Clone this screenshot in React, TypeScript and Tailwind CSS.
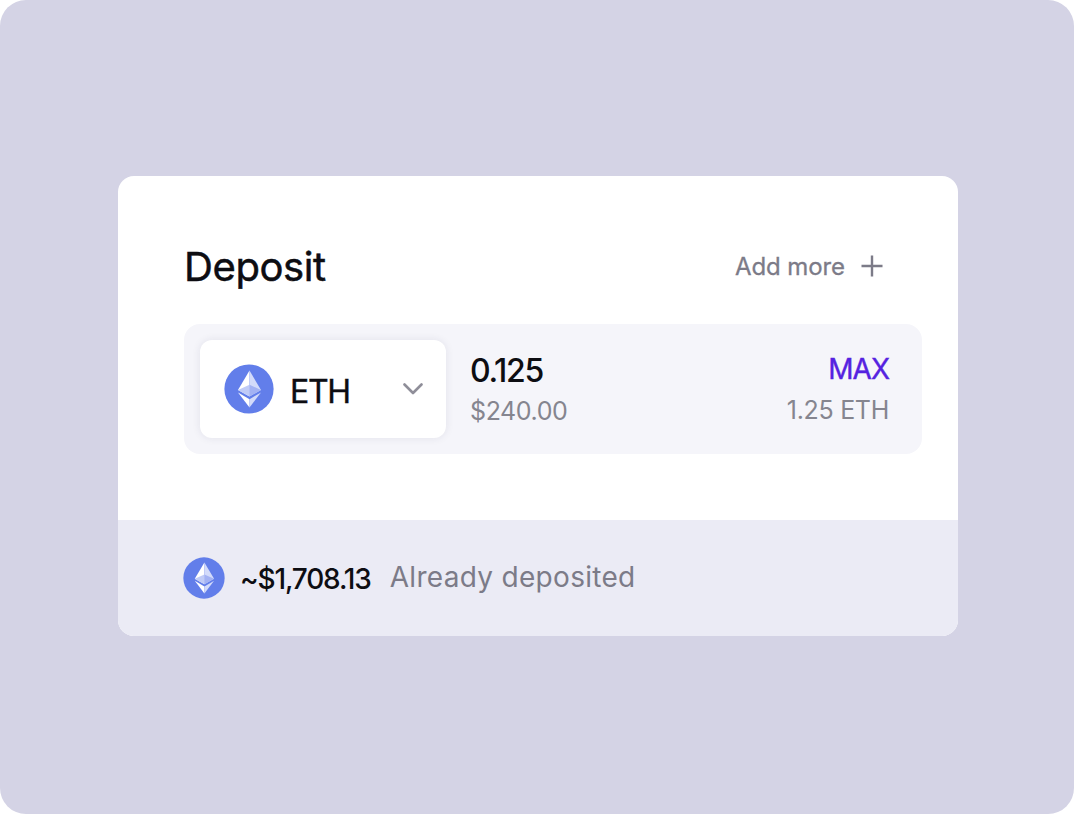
const EthIcon = ({ className }: { className: string }) => (
    <svg viewBox="0 0 50 50" className={className} aria-hidden="true">
        <circle cx="25" cy="25" r="24.6" fill="#627eea" />
        <path d="M25.5 6.5 14 26l11.5 6.5z" fill="#fff" />
        <path d="M25.5 6.5 37 26l-11.5 6.5z" fill="#d3dbfa" />
        <path d="M25.5 20.7 14 26l11.5 6.5z" fill="#c0cbf7" />
        <path d="M25.5 20.7 37 26l-11.5 6.5z" fill="#a3b2f3" />
        <path d="M25.5 35.2 14 28.4l11.5 15.1z" fill="#fff" />
        <path d="M25.5 35.2 37 28.4 25.5 43.5z" fill="#d3dbfa" />
    </svg>
);

const AssetSelect = () => (
    <button className="flex h-[98px] w-[246px] items-center rounded-xl bg-white pr-[23px] pl-6 shadow-[0_0_8px_rgba(30,30,80,0.09)]">
        <EthIcon className="h-[50px] w-[50px]" />
        <span className="mt-[5px] ml-4 text-[32px] leading-10 tracking-[-1.3px] text-[#0d0d12] [-webkit-text-stroke:0.4px]">ETH</span>
        <svg
            viewBox="0 0 20 12"
            className="ml-auto h-3 w-5"
            fill="none"
            stroke="#8f8e99"
            strokeWidth="2.6"
            strokeLinecap="round"
            strokeLinejoin="round"
        >
            <path d="M1.5 1.5 10 10l8.5-8.5" />
        </svg>
    </button>
);

const DepositRow = () => (
    <div className="flex h-[130px] items-center rounded-2xl bg-[#f5f5fa] pr-[33px] pl-4">
        <AssetSelect />
        <div className="ml-6 flex flex-col pt-[3px]">
            <span className="text-[32px] leading-10 font-medium tracking-[-1.3px] text-[#0d0d12]">0.125</span>
            <span className="text-[25px] leading-10 tracking-[-0.4px] text-[#85858f]">$240.00</span>
        </div>
        <div className="ml-auto flex flex-col items-end">
            <button className="text-[28px] leading-[41px] tracking-[-1px] text-[#5522e0] [-webkit-text-stroke:0.4px]">MAX</button>
            <span className="text-[25px] leading-10 tracking-[-0.3px] text-[#85858f]">1.25 ETH</span>
        </div>
    </div>
);

export default function App() {
    return (
        <div className="h-[814px] w-[1074px] bg-white font-['Inter',sans-serif]">
            <main className="flex h-full items-start justify-center rounded-[26px] bg-[#d4d3e5] pt-44 pl-0.5">
                <section className="h-[460px] w-[840px] overflow-hidden rounded-2xl bg-white">
                    <div className="h-[344px] pt-[66px] pr-9 pl-[66px]">
                        <header className="flex h-[50px] items-center justify-between pr-[39px]">
                            <h1 className="text-[40px] leading-[50px] tracking-[-0.4px] text-[#0d0d12] [-webkit-text-stroke:0.5px]">Deposit</h1>
                            <button className="flex items-center gap-4 text-2xl tracking-[-0.1px] text-[#7c7b88] [-webkit-text-stroke:0.3px]">
                                Add more
                                <svg viewBox="0 0 22 22" className="mb-0.5 h-[22px] w-[22px]" stroke="#7c7b88" strokeWidth="2.4">
                                    <path d="M11 .5v21M.5 11h21" />
                                </svg>
                            </button>
                        </header>
                        <div className="mt-8">
                            <DepositRow />
                        </div>
                    </div>
                    <footer className="flex h-[116px] items-center bg-[#ebebf5] pl-[65px]">
                        <EthIcon className="h-[42px] w-[42px]" />
                        <span className="mt-0.5 ml-[15px] text-[28px] font-medium tracking-[-1.15px] text-[#0d0d12]">~$1,708.13</span>
                        <span className="mb-0.5 ml-[19px] text-[28px] tracking-[0.3px] text-[#7c7b88]">Already deposited</span>
                    </footer>
                </section>
            </main>
        </div>
    );
}
